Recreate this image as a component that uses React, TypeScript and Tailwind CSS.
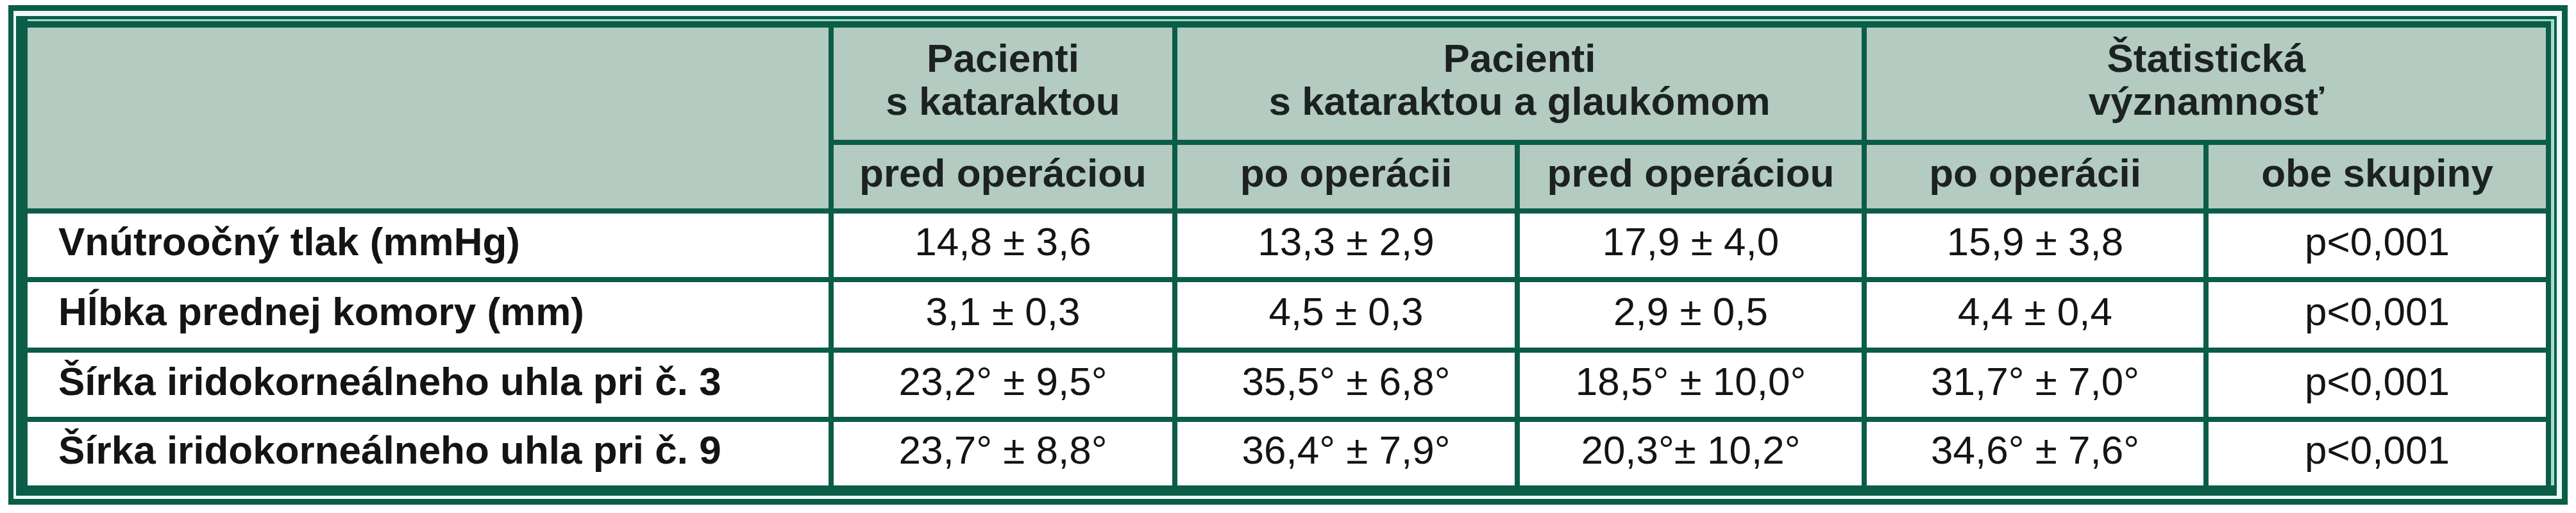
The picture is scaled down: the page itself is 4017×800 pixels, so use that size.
const LINE = 'bg-[#0b5d48]';
const HEAD = 'bg-[#b3cbc1]';

type Row = { label: string; values: string[] };

const rows: Row[] = [
  { label: 'Vnútroočný tlak (mmHg)', values: ['14,8 ± 3,6', '13,3 ± 2,9', '17,9 ± 4,0', '15,9 ± 3,8', 'p<0,001'] },
  { label: 'Hĺbka prednej komory (mm)', values: ['3,1 ± 0,3', '4,5 ± 0,3', '2,9 ± 0,5', '4,4 ± 0,4', 'p<0,001'] },
  {
    label: 'Šírka iridokorneálneho uhla pri č. 3',
    values: ['23,2° ± 9,5°', '35,5° ± 6,8°', '18,5° ± 10,0°', '31,7° ± 7,0°', 'p<0,001']
  },
  {
    label: 'Šírka iridokorneálneho uhla pri č. 9',
    values: ['23,7° ± 8,8°', '36,4° ± 7,9°', '20,3°± 10,2°', '34,6° ± 7,6°', 'p<0,001']
  }
];

const subHeads = ['pred operáciou', 'po operácii', 'pred operáciou', 'po operácii', 'obe skupiny'];

function GroupHead({ lines, span }: { lines: string[]; span: string }) {
  return (
    <div className={`${HEAD} ${span} flex flex-col items-center justify-center pb-[14px] text-[62px] font-bold leading-[67px] text-[#1c2220]`}>
      {lines.map((l) => (
        <span key={l} className="whitespace-nowrap">
          {l}
        </span>
      ))}
    </div>
  );
}

export default function App() {
  return (
    <div
      className="h-[800px] w-[4017px] bg-white pl-[13px] pt-[8px]"
      style={{ fontFamily: '"Liberation Sans", Arial, sans-serif' }}>
      <div className="w-fit border-t-[9px] border-r-[9px] border-b-[9px] border-l-[8px] border-[#0b5d48] bg-[#ecfbf7] pt-[8px] pr-[8px] pb-[5px] pl-[4px]">
        <div className="w-fit border-t-[5px] border-r-[4px] border-b-[16px] border-l-[18px] border-[#0b5d48] bg-[#a4dccb] pt-[3px] pr-[5px]">
          <div className="w-fit border-t-[10px] border-r-[8px] border-[#0b5d48]">
            <div
              className={`grid ${LINE} grid-cols-[1249px_528px_526px_533px_525px_526px] grid-rows-[175px_99px_99px_102px_100px_99px] gap-[8px]`}>
              <div className={`${HEAD} row-span-2`} />
              <GroupHead lines={['Pacienti', 's kataraktou']} span="" />
              <GroupHead lines={['Pacienti', 's kataraktou a glaukómom']} span="col-span-2" />
              <GroupHead lines={['Štatistická', 'významnosť']} span="col-span-2" />

              {subHeads.map((h, i) => (
                <div
                  key={`${h}-${i}`}
                  className={`${HEAD} flex items-center justify-center pb-[12px] text-[62px] font-bold whitespace-nowrap text-[#1c2220]`}>
                  {h}
                </div>
              ))}

              {rows.map((r) => (
                <>
                  <div
                    key={r.label}
                    className="flex items-center bg-white pb-[12px] pl-[48px] text-[62px] font-bold whitespace-nowrap text-[#141414]">
                    {r.label}
                  </div>
                  {r.values.map((v, i) => (
                    <div
                      key={`${r.label}-${i}`}
                      className="flex items-center justify-center bg-white pb-[12px] text-[62px] whitespace-nowrap text-[#141414]">
                      {v}
                    </div>
                  ))}
                </>
              ))}
            </div>
          </div>
        </div>
      </div>
    </div>
  );
}
